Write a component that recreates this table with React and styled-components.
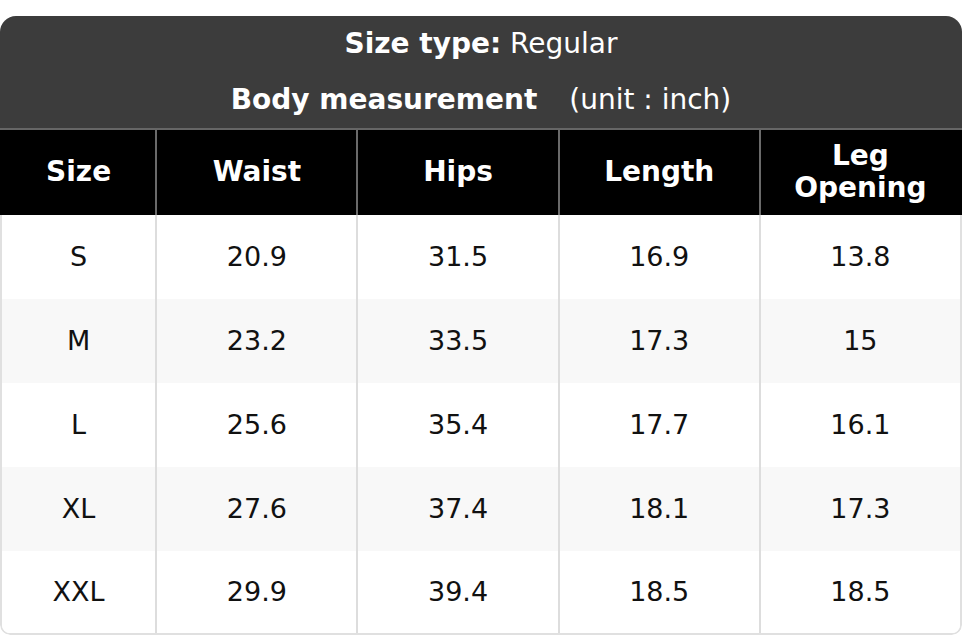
import React from "react";
import styled, { createGlobalStyle } from "styled-components";

const GlobalStyle = createGlobalStyle`
  html, body {
    margin: 0;
    padding: 0;
    background: #ffffff;
  }
  body {
    font-family: "DejaVu Sans", "Noto Sans", sans-serif;
  }
`;

const Wrapper = styled.div`
  width: 962px;
  margin-top: 16px;
  border-radius: 16px 16px 10px 10px;
  overflow: hidden;
`;

const Title = styled.div`
  background: #3c3c3c;
  color: #ffffff;
  font-size: 28px;
  text-align: center;
`;

const TitleLine = styled.div`
  height: 56px;
  line-height: 55px;
  b {
    font-weight: bold;
  }
`;

const Unit = styled.span`
  margin-left: 32px;
`;

const Grid = styled.div`
  display: grid;
  grid-template-columns: 16% 21% 21% 21% 21%;
`;

const HeadRow = styled(Grid)`
  background: #000000;
  border-top: 2px solid #666666;
  padding: 0 2px;
  height: 85px;
`;

const HeadCell = styled.div`
  display: flex;
  align-items: center;
  justify-content: center;
  text-align: center;
  color: #ffffff;
  font-weight: bold;
  font-size: 28px;
  line-height: 32px;
  padding-bottom: 2px;
  border-left: ${(p) => (p.first ? "none" : "2px solid #6a6a6a")};
`;

const Body = styled.div`
  border: 2px solid #e0e0e0;
  border-top: none;
  border-radius: 0 0 10px 10px;
  overflow: hidden;
`;

const Row = styled(Grid)`
  height: ${(p) => (p.last ? "82px" : "84px")};
  background: ${(p) => (p.alt ? "#f8f8f8" : "#ffffff")};
`;

const Cell = styled.div`
  display: flex;
  align-items: center;
  justify-content: center;
  color: #111111;
  font-size: 27px;
  padding-bottom: 2px;
  border-left: ${(p) => (p.first ? "none" : "2px solid #dddddd")};
`;

const headers = ["Size", "Waist", "Hips", "Length", "Leg\nOpening"];

const rows = [
  ["S", "20.9", "31.5", "16.9", "13.8"],
  ["M", "23.2", "33.5", "17.3", "15"],
  ["L", "25.6", "35.4", "17.7", "16.1"],
  ["XL", "27.6", "37.4", "18.1", "17.3"],
  ["XXL", "29.9", "39.4", "18.5", "18.5"],
];

export default function App() {
  return (
    <>
      <GlobalStyle />
      <Wrapper>
        <Title>
          <TitleLine>
            <b>Size type:</b> Regular
          </TitleLine>
          <TitleLine>
            <b>Body measurement</b>
            <Unit>(unit : inch)</Unit>
          </TitleLine>
        </Title>
        <HeadRow>
          {headers.map((h, i) => (
            <HeadCell key={h} first={i === 0}>
              <span>
                {h.split("\n").map((part, j) => (
                  <div key={j}>{part}</div>
                ))}
              </span>
            </HeadCell>
          ))}
        </HeadRow>
        <Body>
          {rows.map((r, i) => (
            <Row key={r[0]} alt={i % 2 === 1} last={i === rows.length - 1}>
              {r.map((v, j) => (
                <Cell key={j} first={j === 0}>
                  {v}
                </Cell>
              ))}
            </Row>
          ))}
        </Body>
      </Wrapper>
    </>
  );
}
